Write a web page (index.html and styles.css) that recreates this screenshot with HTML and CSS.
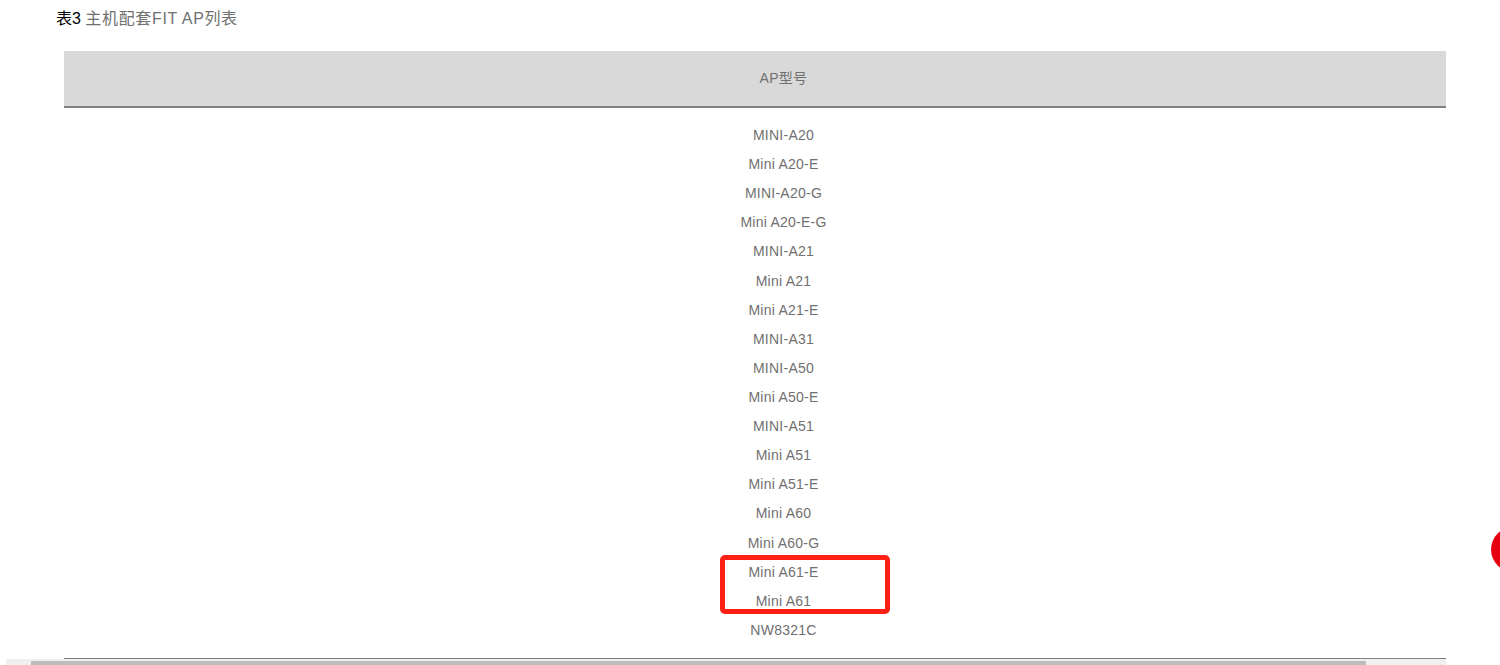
FILE: index.html
```html
<!DOCTYPE html>
<html lang="zh">
<head>
<meta charset="utf-8">
<title>表3 主机配套FIT AP列表</title>
<link rel="stylesheet" href="styles.css">
</head>
<body>
<main class="page">
  <p class="caption"><span class="caption-num">表3</span> <span class="caption-text">主机配套FIT AP列表</span></p>
  <section class="scroller">
    <table class="ap-table">
      <thead>
        <tr><th>AP型号</th></tr>
      </thead>
      <tbody>
        <tr><td>
          <p>MINI-A20</p>
          <p>Mini A20-E</p>
          <p>MINI-A20-G</p>
          <p>Mini A20-E-G</p>
          <p>MINI-A21</p>
          <p>Mini A21</p>
          <p>Mini A21-E</p>
          <p>MINI-A31</p>
          <p>MINI-A50</p>
          <p>Mini A50-E</p>
          <p>MINI-A51</p>
          <p>Mini A51</p>
          <p>Mini A51-E</p>
          <p>Mini A60</p>
          <p>Mini A60-G</p>
          <p>Mini A61-E</p>
          <p>Mini A61</p>
          <p>NW8321C</p>
        </td></tr>
      </tbody>
    </table>
    <div class="scroll-track"><div class="scroll-thumb"></div></div>
  </section>
</main>
<div class="highlight"></div>
<div class="float-btn"></div>
</body>
</html>
```
FILE: styles.css
```css
html, body {
  margin: 0;
  padding: 0;
  height: 665px;
  overflow: hidden;
  background: #fff;
}
body {
  position: relative;
  font-family: "Liberation Sans", "Noto Sans CJK SC", sans-serif;
  color: #707070;
}
.page {
  display: flex;
  flex-direction: column;
}
.caption {
  margin: 0;
  padding: 10px 0 0 56px;
  height: 51px;
  box-sizing: border-box;
  font-size: 16px;
  line-height: 18px;
  color: #707070;
}
.caption-num {
  color: #000;
}
.caption-text {
  letter-spacing: 0.65px;
}
.scroller {
  margin-left: 6px;
  width: 1440px;
  overflow: hidden;
}
.ap-table {
  margin-left: 58px;
  width: 1439px;
  border-collapse: collapse;
  border-bottom: 1px solid #808080;
}
.ap-table th {
  height: 52px;
  padding: 0 0 3px;
  box-sizing: content-box;
  background: #d9d9d9;
  border-bottom: 2px solid #808080;
  font-size: 14px;
  font-weight: normal;
  letter-spacing: 0.3px;
  color: #707070;
  text-align: center;
}
.ap-table td {
  padding: 13px 0 12.8px;
  text-align: center;
  font-size: 14px;
  letter-spacing: 0.25px;
}
.ap-table p {
  margin: 0;
  height: 29.12px;
  line-height: 29.12px;
}
.scroll-track {
  height: 6px;
  padding: 2px 0 0 25px;
  box-sizing: border-box;
  background: #f0f0f0;
}
.scroll-thumb {
  width: 1335px;
  height: 4px;
  background: #bcbcbc;
}
.highlight {
  position: absolute;
  left: 720px;
  top: 555px;
  width: 170px;
  height: 59px;
  box-sizing: border-box;
  border: 5px solid #ff2015;
  border-radius: 5px;
}
.float-btn {
  position: absolute;
  left: 1491px;
  top: 527px;
  width: 45px;
  height: 45px;
  border-radius: 50%;
  background: #e60012;
}
```
